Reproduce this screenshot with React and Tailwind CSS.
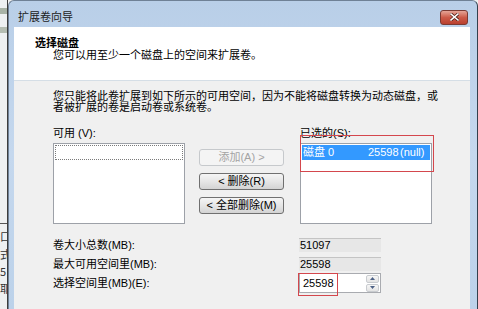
import React from 'react'

// Sliver of the window behind the dialog
function BackgroundStrip() {
  return (
    <div className="flex w-[8px] shrink-0 flex-col overflow-hidden border-r border-[#3d3d3d] bg-[#eef0f1] text-[11px] leading-none text-[#333]">
      <div className="mt-[8px] h-[6px] w-[7px] bg-[#a9b3a6]" />
      <div className="mt-[13px] h-[6px] w-[7px] bg-[#b5bdb2]" />
      <div className="mt-[190px] h-px w-[7px] bg-[#555]" />
      <div className="mt-[5px] flex flex-col gap-[3px] whitespace-nowrap font-['Noto_Sans_CJK_SC',sans-serif]">
        <span className="leading-[15px]">口</span>
        <span className="leading-[15px]">式</span>
        <span className="leading-[13px]">5</span>
        <span className="leading-[15px]">耶</span>
      </div>
    </div>
  )
}

function WinButton({ children, disabled }) {
  return (
    <div
      className={`flex h-[17px] w-[85px] items-center justify-center rounded-[3px] border text-[11px] leading-none ${
        disabled
          ? 'border-[#c6c9cc] bg-[#f4f4f4] text-[#a3a3a3]'
          : 'border-[#707070] bg-gradient-to-b from-[#f5f5f5] via-[#e6e6e6] to-[#d3d3d3] text-black'
      }`}
    >
      {children}
    </div>
  )
}

function ReadOnlyField({ value }) {
  return (
    <div className="flex h-[14px] w-[82px] items-center border-t border-[#c4c4c4] bg-[#e7e7e7] pl-[1px] leading-none">
      {value}
    </div>
  )
}

function Spinner() {
  return (
    <div className="mr-[1px] flex h-[17px] w-[13px] flex-col gap-px">
      <div className="flex flex-1 items-center justify-center rounded-[2px] border border-[#c9ccd0] bg-gradient-to-b from-[#f7f7f7] to-[#e3e3e3]">
        <svg width="5" height="3" viewBox="0 0 5 3">
          <path d="M2.5 0 L5 3 L0 3 Z" fill="#4d6185" />
        </svg>
      </div>
      <div className="flex flex-1 items-center justify-center rounded-[2px] border border-[#c9ccd0] bg-gradient-to-b from-[#f7f7f7] to-[#e3e3e3]">
        <svg width="5" height="3" viewBox="0 0 5 3">
          <path d="M0 0 L5 0 L2.5 3 Z" fill="#4d6185" />
        </svg>
      </div>
    </div>
  )
}

export default function App() {
  return (
    <div className="flex h-[309px] w-[478px] overflow-hidden bg-[#f0f0f0] font-['Liberation_Sans','Noto_Sans_CJK_SC',sans-serif] text-[11px] text-black">
      <BackgroundStrip />

      {/* Dialog window */}
      <div className="flex w-[470px] shrink-0 flex-col rounded-t-[6px] border border-b-0 border-l-[#6f8196] border-r-[#34404d] border-t-[#6f8196] bg-gradient-to-b from-[#b9cfe8] via-[#c5d8ee] to-[#bcd2ea]">
        {/* Title bar */}
        <div className="flex h-[26px] shrink-0 items-center justify-between pl-[9px] pr-[9px] pt-[6px]">
          <span className="text-[11px] leading-none text-[#1b1b1b]">扩展卷向导</span>
          <div className="flex h-[15px] w-[28px] items-center justify-center rounded-[3px] border border-[#7a3a33] bg-gradient-to-b from-[#e4a497] via-[#cc5a48] to-[#b9402f]">
            <svg width="9" height="8" viewBox="0 0 9 8">
              <path d="M1 1 L8 7 M8 1 L1 7" stroke="#4a1a14" strokeWidth="3" strokeLinecap="square" />
              <path d="M1 1 L8 7 M8 1 L1 7" stroke="#ffffff" strokeWidth="1.6" strokeLinecap="square" />
            </svg>
          </div>
        </div>

        {/* Client area */}
        <div className="ml-[5px] mr-[7px] flex flex-1 flex-col">
          {/* Header */}
          <div className="h-[54px] shrink-0 border-b border-[#d5dee6] bg-white pl-[21px] pt-[10px]">
            <div className="font-bold leading-[12px]">选择磁盘</div>
            <div className="pl-[18px] leading-[12px]">您可以用至少一个磁盘上的空间来扩展卷。</div>
          </div>

          {/* Body */}
          <div className="flex-1 bg-[#f0f0f0] pl-[39px] pt-[10px]">
            <div className="whitespace-nowrap leading-[11px]">
              <p>您只能将此卷扩展到如下所示的可用空间，因为不能将磁盘转换为动态磁盘，或</p>
              <p>者被扩展的卷是启动卷或系统卷。</p>
            </div>

            {/* Available / selected lists */}
            <div className="mt-[13px] flex items-start">
              <div className="w-[132px]">
                <div className="leading-[14px]">可用 (V):</div>
                <div className="mt-[3px] h-[81px] border border-[#9da1a8] bg-white p-[1px]">
                  <div className="h-[15px] border border-dotted border-[#7a7a7a]" />
                </div>
              </div>

              <div className="ml-[14px] flex flex-col gap-[7px] pt-[23px]">
                <WinButton disabled>添加(A) &gt;</WinButton>
                <WinButton>&lt; 删除(R)</WinButton>
                <WinButton>&lt; 全部删除(M)</WinButton>
              </div>

              <div className="relative ml-[16px] w-[132px]">
                <div className="leading-[14px]">已选的(S):</div>
                <div className="mt-[3px] h-[81px] border border-[#9da1a8] bg-white p-[1px]">
                  <div className="flex h-[15px] items-center overflow-hidden whitespace-nowrap bg-[#3399ff] pl-px leading-none text-white">
                    <span className="w-[65px] shrink-0">磁盘 0</span>
                    <span className="w-[32px] shrink-0">25598</span>
                    <span>(null)</span>
                  </div>
                </div>
                <div className="absolute left-0 top-[9px] h-[37px] w-[134px] border-[1.5px] border-[#d4474d]" />
              </div>
            </div>

            {/* Sizes */}
            <div className="mt-[14px] flex flex-col">
              <div className="flex h-[14px] items-center">
                <span className="w-[246px] leading-none">卷大小总数(MB):</span>
                <ReadOnlyField value="51097" />
              </div>
              <div className="mt-[5px] flex h-[14px] items-center">
                <span className="w-[246px] leading-none">最大可用空间里(MB):</span>
                <ReadOnlyField value="25598" />
              </div>
              <div className="mt-[2px] flex h-[20px] items-center">
                <span className="w-[246px] leading-none">选择空间里(MB)(E):</span>
                <div className="relative flex h-[20px] w-[82px] items-center justify-between border border-[#a9abb0] bg-white pl-[3px]">
                  <span className="leading-none">25598</span>
                  <Spinner />
                  <div className="absolute left-[-2px] top-[-1px] h-[23px] w-[40px] border-[1.5px] border-[#d4474d]" />
                </div>
              </div>
            </div>
          </div>
        </div>
      </div>
    </div>
  )
}
